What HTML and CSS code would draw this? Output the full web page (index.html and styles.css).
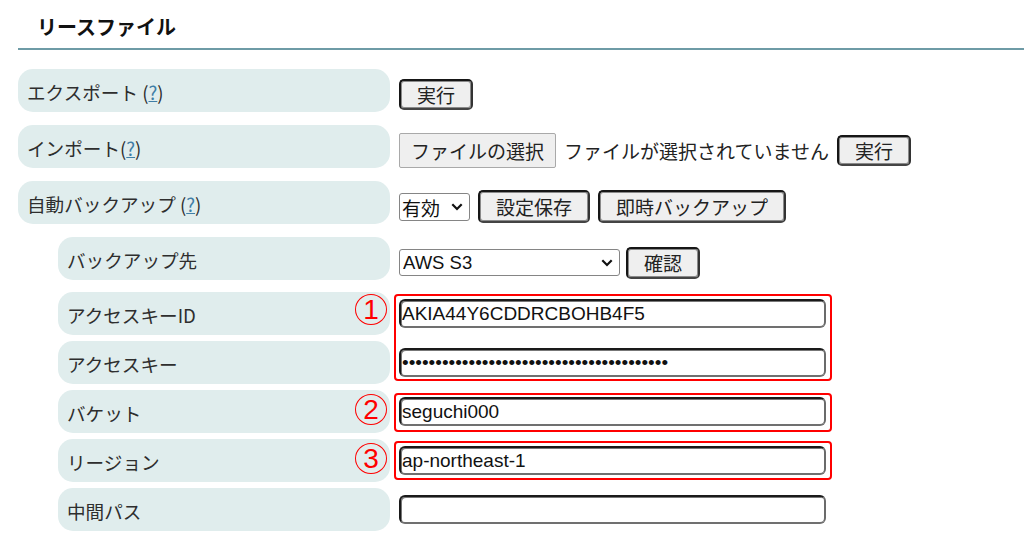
FILE: index.html
```html
<!DOCTYPE html>
<html lang="ja">
<head>
<meta charset="utf-8">
<title>リースファイル</title>
<link rel="stylesheet" href="styles.css">
</head>
<body>
<div class="page">
  <h1 class="title">リースファイル</h1>
  <div class="form">
    <div class="row top">
      <div class="label">エクスポート (<a class="help" href="#">?</a>)</div>
      <div class="ctrl"><button class="btn">実行</button></div>
    </div>
    <div class="row top">
      <div class="label">インポート(<a class="help" href="#">?</a>)</div>
      <div class="ctrl">
        <button class="file-btn">ファイルの選択</button>
        <span class="file-name">ファイルが選択されていません</span>
        <button class="btn">実行</button>
      </div>
    </div>
    <div class="row top">
      <div class="label">自動バックアップ (<a class="help" href="#">?</a>)</div>
      <div class="ctrl">
        <div class="sel sel-small">
          <select><option>有効</option><option>無効</option></select>
          <svg class="chev" viewBox="0 0 12 8" width="12" height="8"><path d="M1.3 1.3 L6 6 L10.7 1.3" fill="none" stroke="#111" stroke-width="2.2"/></svg>
        </div>
        <button class="btn">設定保存</button>
        <button class="btn">即時バックアップ</button>
      </div>
    </div>
    <div class="row sub top4">
      <div class="label">バックアップ先</div>
      <div class="ctrl">
        <div class="sel sel-wide">
          <select><option>AWS S3</option></select>
          <svg class="chev" viewBox="0 0 12 8" width="12" height="8"><path d="M1.3 1.3 L6 6 L10.7 1.3" fill="none" stroke="#111" stroke-width="2.2"/></svg>
        </div>
        <button class="btn btn-sm">確認</button>
      </div>
    </div>
    <div class="row sub">
      <div class="label">アクセスキーID</div>
      <div class="ctrl">
        <span class="mark mark-1">1</span>
        <span class="box box-1"></span>
        <input class="text" type="text" value="AKIA44Y6CDDRCBOHB4F5">
      </div>
    </div>
    <div class="row sub">
      <div class="label">アクセスキー</div>
      <div class="ctrl">
        <input class="text" type="password" value="abcdefghijklmnopqrstuvwxyz0123456789ABCD">
      </div>
    </div>
    <div class="row sub">
      <div class="label">バケット</div>
      <div class="ctrl">
        <span class="mark mark-2">2</span>
        <span class="box box-2"></span>
        <input class="text" type="text" value="seguchi000">
      </div>
    </div>
    <div class="row sub">
      <div class="label">リージョン</div>
      <div class="ctrl">
        <span class="mark mark-3">3</span>
        <span class="box box-3"></span>
        <input class="text" type="text" value="ap-northeast-1">
      </div>
    </div>
    <div class="row sub">
      <div class="label">中間パス</div>
      <div class="ctrl">
        <input class="text" type="text" value="">
      </div>
    </div>
  </div>
</div>
</body>
</html>
```
FILE: styles.css
```css
* { box-sizing: border-box; }
html, body { margin: 0; padding: 0; background: #fff; }
body {
  font-family: "Noto Sans CJK JP", "Noto Sans", sans-serif;
  color: #333;
  width: 1024px;
  height: 549px;
  overflow: hidden;
}
.page { padding-left: 18px; }
.title {
  margin: 0;
  padding: 13px 0 7px 19px;
  font-size: 20px;
  line-height: 28px;
  font-weight: bold;
  color: #111;
  border-bottom: 2px solid #6e9ba6;
}
.form { padding-top: 19px; }
.row {
  display: grid;
  grid-template-columns: 372px 1fr;
  column-gap: 9px;
  height: 43px;
  margin-bottom: 6px;
}
.row.top { margin-bottom: 13px; }
.row.top4 { margin-bottom: 12px; }
.row.sub {
  padding-left: 40px;
  grid-template-columns: 332px 1fr;
}
.label {
  background: #e0eded;
  border-radius: 15px;
  display: flex;
  align-items: center;
  padding: 1px 0 0 9px;
  font-size: 18.6px;
  color: #2e2e2e;
  white-space: nowrap;
}
.help { color: #3f7ea6; text-decoration: underline; }
.ctrl {
  position: relative;
  display: flex;
  align-items: center;
  gap: 8px;
}
.row.top .ctrl, .row.top4 .ctrl { padding-top: 8px; }
.btn {
  font-family: "Noto Sans CJK JP", sans-serif;
  font-size: 19px;
  color: #222;
  background: #efefef;
  border: 2px solid #161616;
  border-bottom-color: #444;
  border-right-color: #333;
  box-shadow: inset 0 0 0 1px #8a8a8a;
  border-radius: 5px;
  height: 31px;
  padding: 0 16px;
  line-height: 1;
}
.row:nth-child(3) .btn { height: 33px; }
.btn-sm { height: 32px; margin-left: -2px; }
.file-btn {
  font-family: "Noto Sans CJK JP", sans-serif;
  font-size: 19px;
  color: #222;
  background: #efefef;
  border: 1px solid #a9a9a9;
  border-radius: 2px;
  height: 35px;
  padding: 0 11px;
}
.file-name { font-size: 19px; color: #222; }
.sel { position: relative; display: inline-block; }
.sel select {
  -webkit-appearance: none;
  appearance: none;
  font-family: "Noto Sans CJK JP", sans-serif;
  font-size: 19px;
  color: #111;
  background: #fff;
  border: 1px solid #858585;
  border-radius: 3px;
  padding: 0 0 0 2px;
  height: 28px;
  display: block;
}
.sel-small select { width: 71px; }
.sel-wide select {
  width: 221px;
  height: 27px;
  font-family: "Liberation Sans", Arial, sans-serif;
  font-size: 18.5px;
  padding-left: 3px;
}
.chev {
  position: absolute;
  right: 7px;
  top: 10px;
  pointer-events: none;
}
.text {
  width: 427px;
  height: 29px;
  border: 2px solid #1a1a1a;
  border-right-color: #6b6b6b;
  border-bottom-color: #707070;
  box-shadow: inset 1px 1px 0 #777;
  border-radius: 6px;
  padding: 0 1px;
  font-family: "Liberation Sans", Arial, sans-serif;
  font-size: 19px;
  color: #111;
  background: #fff;
  outline: none;
}
.box {
  position: absolute;
  left: -5px;
  width: 438px;
  border: 2px solid #ff0000;
  border-radius: 4px;
  pointer-events: none;
}
.box-1 { top: 2px; height: 87px; }
.box-2 { top: 3px; height: 39px; }
.box-3 { top: 2px; height: 39px; }
.mark {
  position: absolute;
  left: -44px;
  width: 32px;
  height: 31px;
  border: 1.5px solid #ff0000;
  border-radius: 50%;
  color: #ff0000;
  font-family: "Liberation Sans", Arial, sans-serif;
  font-size: 28px;
  line-height: 29px;
  text-align: center;
}
.mark-1 { top: 2px; }
.mark-2 { top: 4px; }
.mark-3 { top: 4px; }
```
